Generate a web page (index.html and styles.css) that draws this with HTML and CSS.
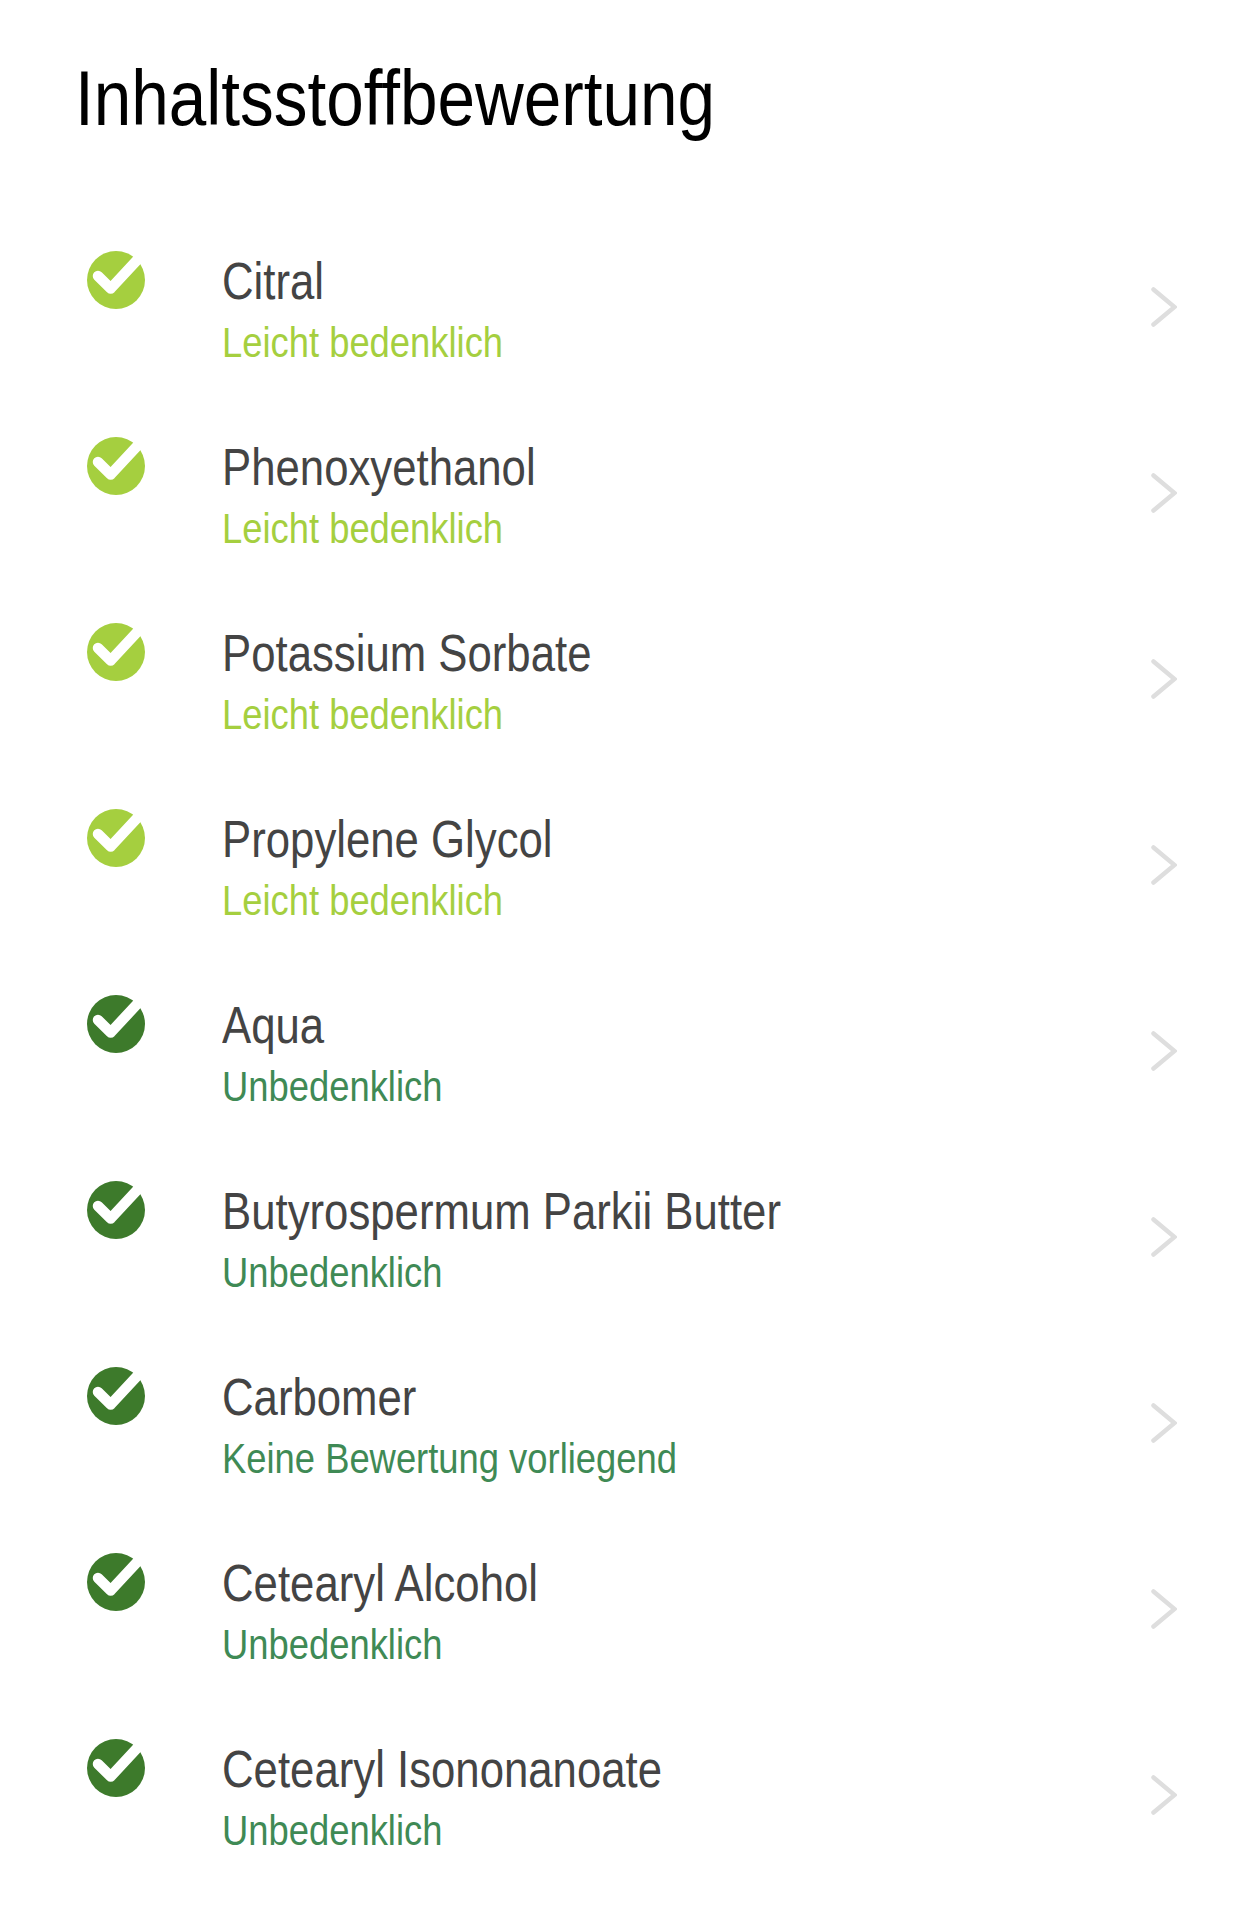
FILE: index.html
```html
<!DOCTYPE html>
<html lang="de">
<head>
<meta charset="utf-8">
<title>Inhaltsstoffbewertung</title>
<link rel="stylesheet" href="styles.css">
</head>
<body>
<svg class="defs" width="0" height="0" aria-hidden="true">
  <symbol id="check" viewBox="0 0 58 58">
    <circle cx="29" cy="29" r="29" fill="currentColor"/>
    <path d="M11 25 L23.7 37.5 L53 6" fill="none" stroke="#fff" stroke-width="10.5" stroke-linecap="round" stroke-linejoin="round"/>
  </symbol>
  <symbol id="chev" viewBox="0 0 26 40">
    <path d="M2.5 2.5 L23.5 20 L2.5 37.5" fill="none" stroke="#dedede" stroke-width="4.5" stroke-linecap="round" stroke-linejoin="miter"/>
  </symbol>
</svg>
<main class="page">
  <h1 class="title">Inhaltsstoffbewertung</h1>
  <ul class="list">
    <li class="row light"><svg class="status"><use href="#check"/></svg><div class="text"><div class="name">Citral</div><div class="rating">Leicht bedenklich</div></div><svg class="chev"><use href="#chev"/></svg></li>
    <li class="row light"><svg class="status"><use href="#check"/></svg><div class="text"><div class="name">Phenoxyethanol</div><div class="rating">Leicht bedenklich</div></div><svg class="chev"><use href="#chev"/></svg></li>
    <li class="row light"><svg class="status"><use href="#check"/></svg><div class="text"><div class="name">Potassium Sorbate</div><div class="rating">Leicht bedenklich</div></div><svg class="chev"><use href="#chev"/></svg></li>
    <li class="row light"><svg class="status"><use href="#check"/></svg><div class="text"><div class="name">Propylene Glycol</div><div class="rating">Leicht bedenklich</div></div><svg class="chev"><use href="#chev"/></svg></li>
    <li class="row dark"><svg class="status"><use href="#check"/></svg><div class="text"><div class="name">Aqua</div><div class="rating">Unbedenklich</div></div><svg class="chev"><use href="#chev"/></svg></li>
    <li class="row dark"><svg class="status"><use href="#check"/></svg><div class="text"><div class="name">Butyrospermum Parkii Butter</div><div class="rating">Unbedenklich</div></div><svg class="chev"><use href="#chev"/></svg></li>
    <li class="row dark"><svg class="status"><use href="#check"/></svg><div class="text"><div class="name">Carbomer</div><div class="rating">Keine Bewertung vorliegend</div></div><svg class="chev"><use href="#chev"/></svg></li>
    <li class="row dark"><svg class="status"><use href="#check"/></svg><div class="text"><div class="name">Cetearyl Alcohol</div><div class="rating">Unbedenklich</div></div><svg class="chev"><use href="#chev"/></svg></li>
    <li class="row dark"><svg class="status"><use href="#check"/></svg><div class="text"><div class="name">Cetearyl Isononanoate</div><div class="rating">Unbedenklich</div></div><svg class="chev"><use href="#chev"/></svg></li>
  </ul>
</main>
</body>
</html>
```

FILE: styles.css
```css
* { box-sizing: border-box; }
html, body { margin: 0; background: #fff; }
body { font-family: "Liberation Sans", sans-serif; font-variant-ligatures: none; width: 1242px; height: 1915px; overflow: hidden; }
.defs { position: absolute; }
.page { padding: 48px 0 0 0; }
.title { margin: 0 0 102px 74.5px; font-size: 78px; line-height: 100px; font-weight: 400; color: #000; white-space: nowrap; transform: scaleX(0.865); transform-origin: left center; }
.list { list-style: none; margin: 0; padding: 0 65.5px 0 87px; }
.row { display: flex; align-items: flex-start; height: 186px; }
.status { width: 58px; height: 58px; margin-top: 1px; flex: none; }
.light { color: #a5cf3f; }
.dark { color: #3d7a2b; }
.text { margin-left: 77px; flex: 1; white-space: nowrap; }
.name { font-size: 52px; line-height: 62px; color: #444; transform: scaleX(0.841); transform-origin: left center; }
.rating { font-size: 42px; line-height: 50px; margin-top: 6px; transform: scaleX(0.866); transform-origin: left center; }
.light .rating { color: #a5cf3f; }
.dark .rating { color: #3f8a55; }
.chev { width: 26px; height: 40px; flex: none; margin-top: 37px; }
```
